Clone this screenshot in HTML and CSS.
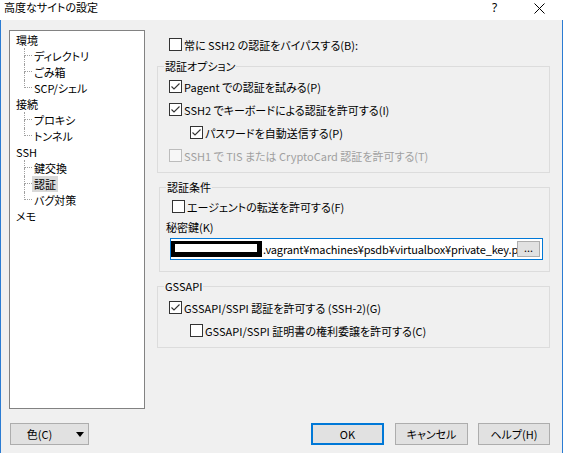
FILE: index.html
```html
<!DOCTYPE html>
<html lang="ja">
<head>
<meta charset="utf-8">
<title>高度なサイトの設定</title>
<link rel="stylesheet" href="styles.css">
</head>
<body>
<div class="titlebar">
  <span class="title">高度なサイトの設定</span>
  <span class="tb-help">?</span>
  <span class="tb-close"><svg width="11" height="11" viewBox="0 0 11 11"><path d="M0.5 0.5 L10.5 10.5 M10.5 0.5 L0.5 10.5" stroke="#000" stroke-width="1" fill="none"/></svg></span>
</div>
<div class="window">
  <div class="main">
    <div class="tree">
      <div class="node"><span class="label">環境</span></div>
      <div class="child"><span class="conn"><span class="conn-top"></span><span class="conn-bot"></span></span><span class="label">ディレクトリ</span></div>
      <div class="child"><span class="conn"><span class="conn-top"></span><span class="conn-bot"></span></span><span class="label">ごみ箱</span></div>
      <div class="child last"><span class="conn"><span class="conn-top"></span><span class="conn-bot"></span></span><span class="label">SCP/シェル</span></div>
      <div class="node"><span class="label">接続</span></div>
      <div class="child"><span class="conn"><span class="conn-top"></span><span class="conn-bot"></span></span><span class="label">プロキシ</span></div>
      <div class="child last"><span class="conn"><span class="conn-top"></span><span class="conn-bot"></span></span><span class="label">トンネル</span></div>
      <div class="node"><span class="label">SSH</span></div>
      <div class="child"><span class="conn"><span class="conn-top"></span><span class="conn-bot"></span></span><span class="label">鍵交換</span></div>
      <div class="child"><span class="conn"><span class="conn-top"></span><span class="conn-bot"></span></span><span class="label selected">認証</span></div>
      <div class="child last"><span class="conn"><span class="conn-top"></span><span class="conn-bot"></span></span><span class="label">バグ対策</span></div>
      <div class="node"><span class="label">メモ</span></div>
    </div>

    <div class="panel">
      <label class="row bypass"><span class="cb"></span><span>常に SSH2 の認証をバイパスする(B):</span></label>

      <fieldset class="group g1">
        <legend>認証オプション</legend>
        <label class="row"><span class="cb"><svg viewBox="0 0 11 11" width="11" height="11"><path d="M1.5 5.5 L4 8 L9.5 2.5" stroke="#333" stroke-width="1.1" fill="none"/></svg></span><span>Pagent での認証を試みる(P)</span></label>
        <label class="row"><span class="cb"><svg viewBox="0 0 11 11" width="11" height="11"><path d="M1.5 5.5 L4 8 L9.5 2.5" stroke="#333" stroke-width="1.1" fill="none"/></svg></span><span>SSH2 でキーボードによる認証を許可する(I)</span></label>
        <label class="row indent"><span class="cb"><svg viewBox="0 0 11 11" width="11" height="11"><path d="M1.5 5.5 L4 8 L9.5 2.5" stroke="#333" stroke-width="1.1" fill="none"/></svg></span><span>パスワードを自動送信する(P)</span></label>
        <label class="row disabled"><span class="cb"></span><span>SSH1 で TIS または CryptoCard 認証を許可する(T)</span></label>
      </fieldset>

      <fieldset class="group g2">
        <legend>認証条件</legend>
        <label class="row"><span class="cb"></span><span>エージェントの転送を許可する(F)</span></label>
        <div class="keylabel">秘密鍵(K)</div>
        <div class="field">
          <span class="redact"></span>
          <span class="path">.vagrant¥machines¥psdb¥virtualbox¥private_key.ppk</span>
          <span class="browse">...</span>
        </div>
      </fieldset>

      <fieldset class="group g3">
        <legend>GSSAPI</legend>
        <label class="row"><span class="cb"><svg viewBox="0 0 11 11" width="11" height="11"><path d="M1.5 5.5 L4 8 L9.5 2.5" stroke="#333" stroke-width="1.1" fill="none"/></svg></span><span>GSSAPI/SSPI 認証を許可する (SSH-2)(G)</span></label>
        <label class="row indent"><span class="cb"></span><span>GSSAPI/SSPI 証明書の権利委譲を許可する(C)</span></label>
      </fieldset>
    </div>
  </div>

  <div class="footer">
    <button class="btn color-btn"><span class="color-text">色(C)</span><span class="tri"></span></button>
    <span class="spacer"></span>
    <button class="btn ok">OK</button>
    <button class="btn">キャンセル</button>
    <button class="btn help">ヘルプ(H)</button>
  </div>
</div>
</body>
</html>
```

FILE: styles.css
```css
* { box-sizing: border-box; }

html, body {
  margin: 0;
  padding: 0;
  background: #f0f0f0;
  width: 563px;
  height: 453px;
  overflow: hidden;
}

body {
  font-family: "Noto Sans CJK JP", "Noto Sans", sans-serif;
  font-size: 11px;
  color: #000;
  font-feature-settings: "palt";
}

.titlebar {
  height: 20px;
  background: #fff;
  display: flex;
  align-items: flex-start;
}

.title {
  padding-left: 4px;
  line-height: 15px;
  font-size: 11px;
  flex: 1;
}

.tb-help {
  width: 12px;
  margin-right: 30px;
  line-height: 15px;
  font-family: "Noto Sans", sans-serif;
  font-size: 12px;
}

.tb-close {
  width: 11px;
  margin-top: 3px;
  margin-right: 18px;
  display: flex;
}

.window {
  height: 433px;
  border-left: 1px solid #2b7cd3;
  border-right: 1px solid #2b7cd3;
  display: flex;
  flex-direction: column;
}

.main {
  display: flex;
  padding: 10px 0 0 8px;
}

/* tree */
.tree {
  width: 136px;
  height: 379px;
  background: #fff;
  border: 1px solid #828282;
  padding: 1px 0 0 0;
}

.node, .child {
  height: 16px;
  line-height: 16px;
  display: flex;
  white-space: nowrap;
  font-size: 11px;
}

.node { padding-left: 4px; }

.child { padding-left: 14px; }

.label {
  padding: 0 2px;
}

.label.selected { background: #d9d9d9; }

.conn {
  width: 8px;
  display: flex;
  flex-direction: column;
}

.conn-top {
  height: 8px;
  border-left: 1px dotted #a0a0a0;
  border-bottom: 1px dotted #a0a0a0;
}

.conn-bot {
  flex: 1;
  border-left: 1px dotted #a0a0a0;
}

.child.last .conn-bot { border-left: none; }

/* panel */
.panel {
  margin-left: 12px;
  width: 393px;
  display: flex;
  flex-direction: column;
}

.row {
  display: flex;
  align-items: center;
  gap: 2px;
  height: 23px;
  padding-left: 11px;
  white-space: nowrap;
}

.row.indent { padding-left: 32px; }

.row.disabled { color: #a0a0a0; }

.bypass {
  margin-top: 3px;
  padding-left: 12px;
}

.cb {
  width: 13px;
  height: 13px;
  flex: none;
  border: 1px solid #333;
  background: #fff;
  display: flex;
  align-items: center;
  justify-content: center;
}

.row.disabled .cb {
  border-color: #bcbcbc;
  background: #f7f7f7;
}

.group {
  margin: 0;
  padding: 0;
  border: 1px solid #dcdcdc;
  min-width: 0;
}

.group legend {
  margin-left: 6px;
  padding: 0 1px;
  line-height: 16px;
}

.g1 {
  margin-top: 2px;
  padding: 1px 0 5px 0;
}

.g2 {
  margin-top: 6px;
  margin-left: 2px;
  padding: 0 0 11px 0;
}

.g2 .row { padding-left: 12px; }

.keylabel {
  height: 16px;
  line-height: 16px;
  padding-left: 6px;
  margin-top: 1px;
}

.field {
  margin: 3px 0 0 10px;
  width: 373px;
  height: 22px;
  border: 1px solid #0078d7;
  background: #fff;
  display: flex;
  align-items: center;
  overflow: hidden;
}

.redact {
  flex: none;
  width: 91px;
  height: 16px;
  background: #fff;
  border-style: solid;
  border-color: #000;
  border-width: 3px 5px 5px 4px;
}

.path {
  flex: 1;
  overflow: hidden;
  white-space: nowrap;
  padding-left: 1px;
  line-height: 20px;
  font-size: 11px;
  letter-spacing: -0.15px;
}

.browse {
  flex: none;
  width: 23px;
  height: 16px;
  margin-right: 2px;
  background: #e1e1e1;
  border: 1px solid #adadad;
  line-height: 11px;
  text-align: center;
  font-family: "Noto Sans", sans-serif;
}

.g3 {
  margin-top: 6px;
  padding: 2px 0 5px 0;
}

/* footer */
.footer {
  margin-top: 14px;
  display: flex;
  align-items: center;
  padding: 0 12px 0 9px;
}

.btn {
  height: 22px;
  width: 73px;
  background: #e1e1e1;
  border: 1px solid #adadad;
  font-family: "Noto Sans CJK JP", "Noto Sans", sans-serif;
  font-size: 11px;
  font-feature-settings: "palt";
  color: #000;
  padding: 0;
  margin: 0;
}

.btn + .btn { margin-left: 11px; }
.btn.help { margin-left: 10px; width: 72px; }

.btn.ok { border: 2px solid #0078d7; }

.color-btn {
  width: 79px;
  display: flex;
  align-items: center;
}

.color-text {
  flex: 1;
  text-align: center;
  padding-left: 2px;
}

.tri {
  width: 0;
  height: 0;
  border-left: 4px solid transparent;
  border-right: 4px solid transparent;
  border-top: 5px solid #000;
  margin-right: 4px;
  margin-left: 10px;
}

.spacer { flex: 1; }
```
